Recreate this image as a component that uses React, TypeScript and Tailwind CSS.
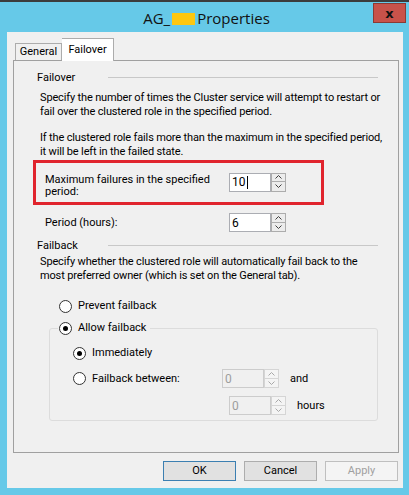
import React from "react";

const font = { fontFamily: 'Roboto, "Liberation Sans", sans-serif' };

function Spinner({ value, disabled, caret }: { value: string; disabled?: boolean; caret?: boolean }) {
  const border = disabled ? "border-[#cccccc]" : "border-[#abadb3]";
  return (
    <div className="flex h-[19px] w-[57px]">
      <div
        className={`flex w-[42px] items-center border ${border} ${disabled ? "bg-[#f0f0f0] text-[#9d9d9d]" : "bg-white text-black"} pl-[2px] text-[12px]`}
      >
        {value}
        {caret && <span className="ml-[1px] inline-block h-[13px] w-[1px] bg-black" />}
      </div>
      <div className="flex w-[15px] flex-col">
        <SpinBtn disabled={disabled} up />
        <SpinBtn disabled={disabled} />
      </div>
    </div>
  );
}

function SpinBtn({ up, disabled }: { up?: boolean; disabled?: boolean }) {
  const stroke = disabled ? "#a8a8a8" : "#404040";
  return (
    <div
      className={`flex h-[9.5px] items-center justify-center border ${up ? "" : "border-t-0"} ${disabled ? "border-[#d5d5d5] bg-[#f4f4f4]" : "border-[#acacac] bg-[#ececec]"}`}
    >
      <svg width="7" height="4" viewBox="0 0 7 4">
        <path d={up ? "M0.5 3.5 L3.5 0.5 L6.5 3.5" : "M0.5 0.5 L3.5 3.5 L6.5 0.5"} fill="none" stroke={stroke} strokeWidth="1" />
      </svg>
    </div>
  );
}

function Radio({ checked }: { checked?: boolean }) {
  return (
    <span className="flex h-[13px] w-[13px] shrink-0 items-center justify-center rounded-full border border-[#333333] bg-white">
      {checked && <span className="h-[5px] w-[5px] rounded-full bg-black" />}
    </span>
  );
}

function Header({ label }: { label: string }) {
  return (
    <div className="flex h-[15px] items-center pr-[20px] pl-[23px]">
      <span className="w-[71px]">{label}</span>
      <div className="h-px flex-1 bg-[#c8c8c8]" />
    </div>
  );
}

export default function App() {
  return (
    <div className="relative h-[495px] w-[409px] overflow-hidden bg-[#66c9e8] text-[11px] text-black" style={font}>
      <div className="h-[2px] bg-[#3c3c3c]" />
      <div
        className="relative flex h-[30px] items-center justify-center pt-[3px] pl-[4px] text-[15px] text-[#111]"
        style={{ fontFamily: '"Open Sans", sans-serif' }}
      >
        <span>AG_</span>
        <span className="mx-[2px] inline-block h-[12px] w-[23px] bg-[#fdc70f]" />
        <span>Properties</span>
        <div className="absolute top-[1px] right-[3px] flex h-[20px] w-[33px] items-center justify-center border border-[#8b3a34] bg-[#c8524a]">
          <span className="text-[13px] leading-none font-bold text-[#111]" style={{ fontFamily: '"DejaVu Sans", sans-serif' }}>
            x
          </span>
        </div>
      </div>

      <div className="mr-[6px] ml-[7px] flex h-[456px] flex-col bg-[#f0f0f0]">
        {/* tabs */}
        <div className="flex h-[28px] items-end pl-[8px]">
          <div className="mb-[-1px] flex h-[18px] w-[47px] items-center justify-center border border-b-0 border-[#acacac] bg-[#f0f0f0]">
            General
          </div>
          <div className="relative z-10 mb-[-1px] flex h-[23px] w-[52px] items-start justify-center border border-b-0 border-l-0 border-[#acacac] bg-white pt-[3px]">
            Failover
          </div>
        </div>

        {/* panel */}
        <div className="ml-[6px] h-[393px] w-[386px] border border-[#a0a0a0] bg-[#f0f0f0] pt-[9px] leading-[14px]">
          <Header label="Failover" />
          <div className="mt-[6px] pl-[26px] tracking-[-0.15px] whitespace-nowrap">
            <p>
              Specify the number of times the Cluster service will attempt to restart or
              <br />
              fail over the clustered role in the specified period.
            </p>
            <p className="mt-[12px]">
              If the clustered role fails more than the maximum in the specified period,
              <br />
              it will be left in the failed state.
            </p>
          </div>

          <div className="mt-[1px] ml-[19px] flex h-[45px] w-[291px] items-center border-[3px] border-[#e0242d] pl-[9px]">
            <div className="mt-[6px] w-[184px] leading-[12px] whitespace-nowrap">
              Maximum failures in the specified
              <br />
              period:
            </div>
            <div className="mb-[1px]">
              <Spinner value="10" caret />
            </div>
          </div>

          <div className="mt-[8px] flex items-center pl-[31px]">
            <span className="w-[184px]">Period (hours):</span>
            <Spinner value="6" />
          </div>

          <div className="mt-[6px]">
            <Header label="Failback" />
          </div>
          <p className="mt-[2px] pl-[26px] tracking-[-0.15px] whitespace-nowrap">
            Specify whether the clustered role will automatically fail back to the
            <br />
            most preferred owner (which is set on the General tab).
          </p>

          <div className="mt-[16px] flex items-center gap-[6px] pl-[45px]">
            <Radio />
            <span>Prevent failback</span>
          </div>

          <div className="mt-[15px] ml-[35px] h-[93px] w-[329px] rounded-[3px] border border-[#dcdcdc]">
            <div className="mt-[-8px] ml-[8px] flex w-fit items-center gap-[6px] bg-[#f0f0f0] pr-[4px] pl-[1px]">
              <Radio checked />
              <span className="whitespace-nowrap">Allow failback</span>
            </div>
            <div className="mt-[11px] flex items-center gap-[6px] pl-[23px]">
              <Radio checked />
              <span>Immediately</span>
            </div>
            <div className="mt-[9px] flex items-center pl-[23px]">
              <Radio />
              <span className="ml-[6px] w-[130px]">Failback between:</span>
              <Spinner value="0" disabled />
              <span className="ml-[11px]">and</span>
            </div>
            <div className="mt-[8px] flex items-center pl-[179px]">
              <Spinner value="0" disabled />
              <span className="ml-[11px]">hours</span>
            </div>
          </div>
        </div>

        {/* buttons */}
        <div className="mt-[8px] flex justify-end gap-[8px] pr-[5px]">
          <button className="h-[20px] w-[73px] border border-[#3c7fb1] bg-[#e1e1e1]">OK</button>
          <button className="h-[20px] w-[73px] border border-[#adadad] bg-[#e1e1e1]">Cancel</button>
          <button className="h-[20px] w-[73px] border border-[#bfbfbf] bg-[#f4f4f4] text-[#a0a0a0]">Apply</button>
        </div>
      </div>
    </div>
  );
}
